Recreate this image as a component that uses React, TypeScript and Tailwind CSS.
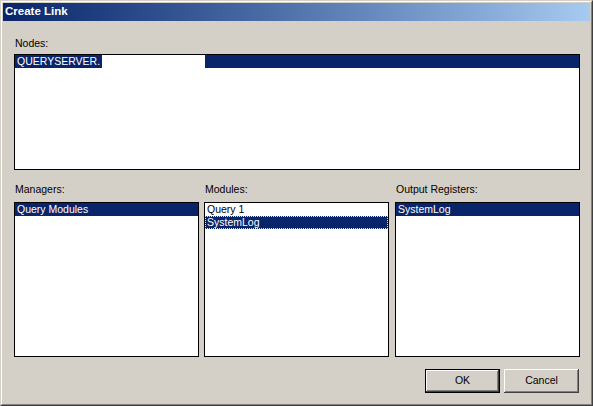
const font = { fontFamily: '"Liberation Sans", Arial, sans-serif' };

function ListBox({ className, children }: { className?: string; children?: React.ReactNode }) {
  return <div className={`border border-black bg-white ${className ?? ''}`}>{children}</div>;
}

function Row({ label, selected, focused }: { label: string; selected?: boolean; focused?: boolean }) {
  return (
    <div
      className={`h-[13px] pl-[2px] leading-[13px] whitespace-nowrap ${
        selected ? 'bg-[#0a246a] text-white' : 'text-black'
      } ${focused ? 'outline-1 outline-dotted outline-[#e8e8c8] -outline-offset-1' : ''}`}
    >
      {label}
    </div>
  );
}

export default function App() {
  return (
    <div
      className="w-[593px] h-[406px] bg-[#d4d0c8] border border-t-[#d4d0c8] border-l-[#d4d0c8] border-r-[#404040] border-b-[#404040] text-[10.5px]"
      style={font}
    >
      <div className="h-full border border-t-white border-l-white border-r-[#808080] border-b-[#808080] p-px flex flex-col">
        <div className="h-[18px] shrink-0 flex items-center pl-[2px] bg-linear-to-r from-[#0a246a] to-[#a6caf0]">
          <span className="text-white font-bold text-[11.5px] leading-none">Create Link</span>
        </div>

        <div className="pl-[11px] pr-[10px] flex flex-col">
          <div className="mt-[16px] h-[13px] leading-[13px] pl-px text-black">Nodes:</div>
          <ListBox className="mt-[4px] h-[116px]">
            <div className="flex h-[13px] leading-[13px]">
              <div className="w-[190px] shrink-0">
                <span className="inline-block bg-[#0a246a] text-white px-[2px]">QUERYSERVER.</span>
              </div>
              <div className="flex-1 bg-[#0a246a]" />
            </div>
          </ListBox>

          <div className="mt-[13px] flex gap-[5px]">
            <div className="w-[185px] flex flex-col">
              <div className="h-[13px] leading-[13px] pl-px text-black">Managers:</div>
              <ListBox className="mt-[6px] h-[155px]">
                <Row label="Query Modules" selected />
              </ListBox>
            </div>
            <div className="w-[185px] flex flex-col">
              <div className="h-[13px] leading-[13px] pl-px text-black">Modules:</div>
              <ListBox className="mt-[6px] h-[155px]">
                <Row label="Query 1" />
                <Row label="SystemLog" selected focused />
              </ListBox>
            </div>
            <div className="w-[185px] ml-px flex flex-col">
              <div className="h-[13px] leading-[13px] pl-px text-black">Output Registers:</div>
              <ListBox className="mt-[6px] h-[155px]">
                <Row label="SystemLog" selected />
              </ListBox>
            </div>
          </div>

          <div className="mt-[12px] flex justify-end gap-[4px] pr-px">
            <button
              type="button"
              className="w-[75px] h-[24px] border border-black bg-[#d4d0c8] text-black shadow-[inset_-1px_-1px_#404040,inset_1px_1px_#ffffff,inset_-2px_-2px_#808080]"
            >
              OK
            </button>
            <button
              type="button"
              className="w-[75px] h-[24px] bg-[#d4d0c8] text-black shadow-[inset_-1px_-1px_#404040,inset_1px_1px_#ffffff,inset_-2px_-2px_#808080]"
            >
              Cancel
            </button>
          </div>
        </div>
      </div>
    </div>
  );
}
